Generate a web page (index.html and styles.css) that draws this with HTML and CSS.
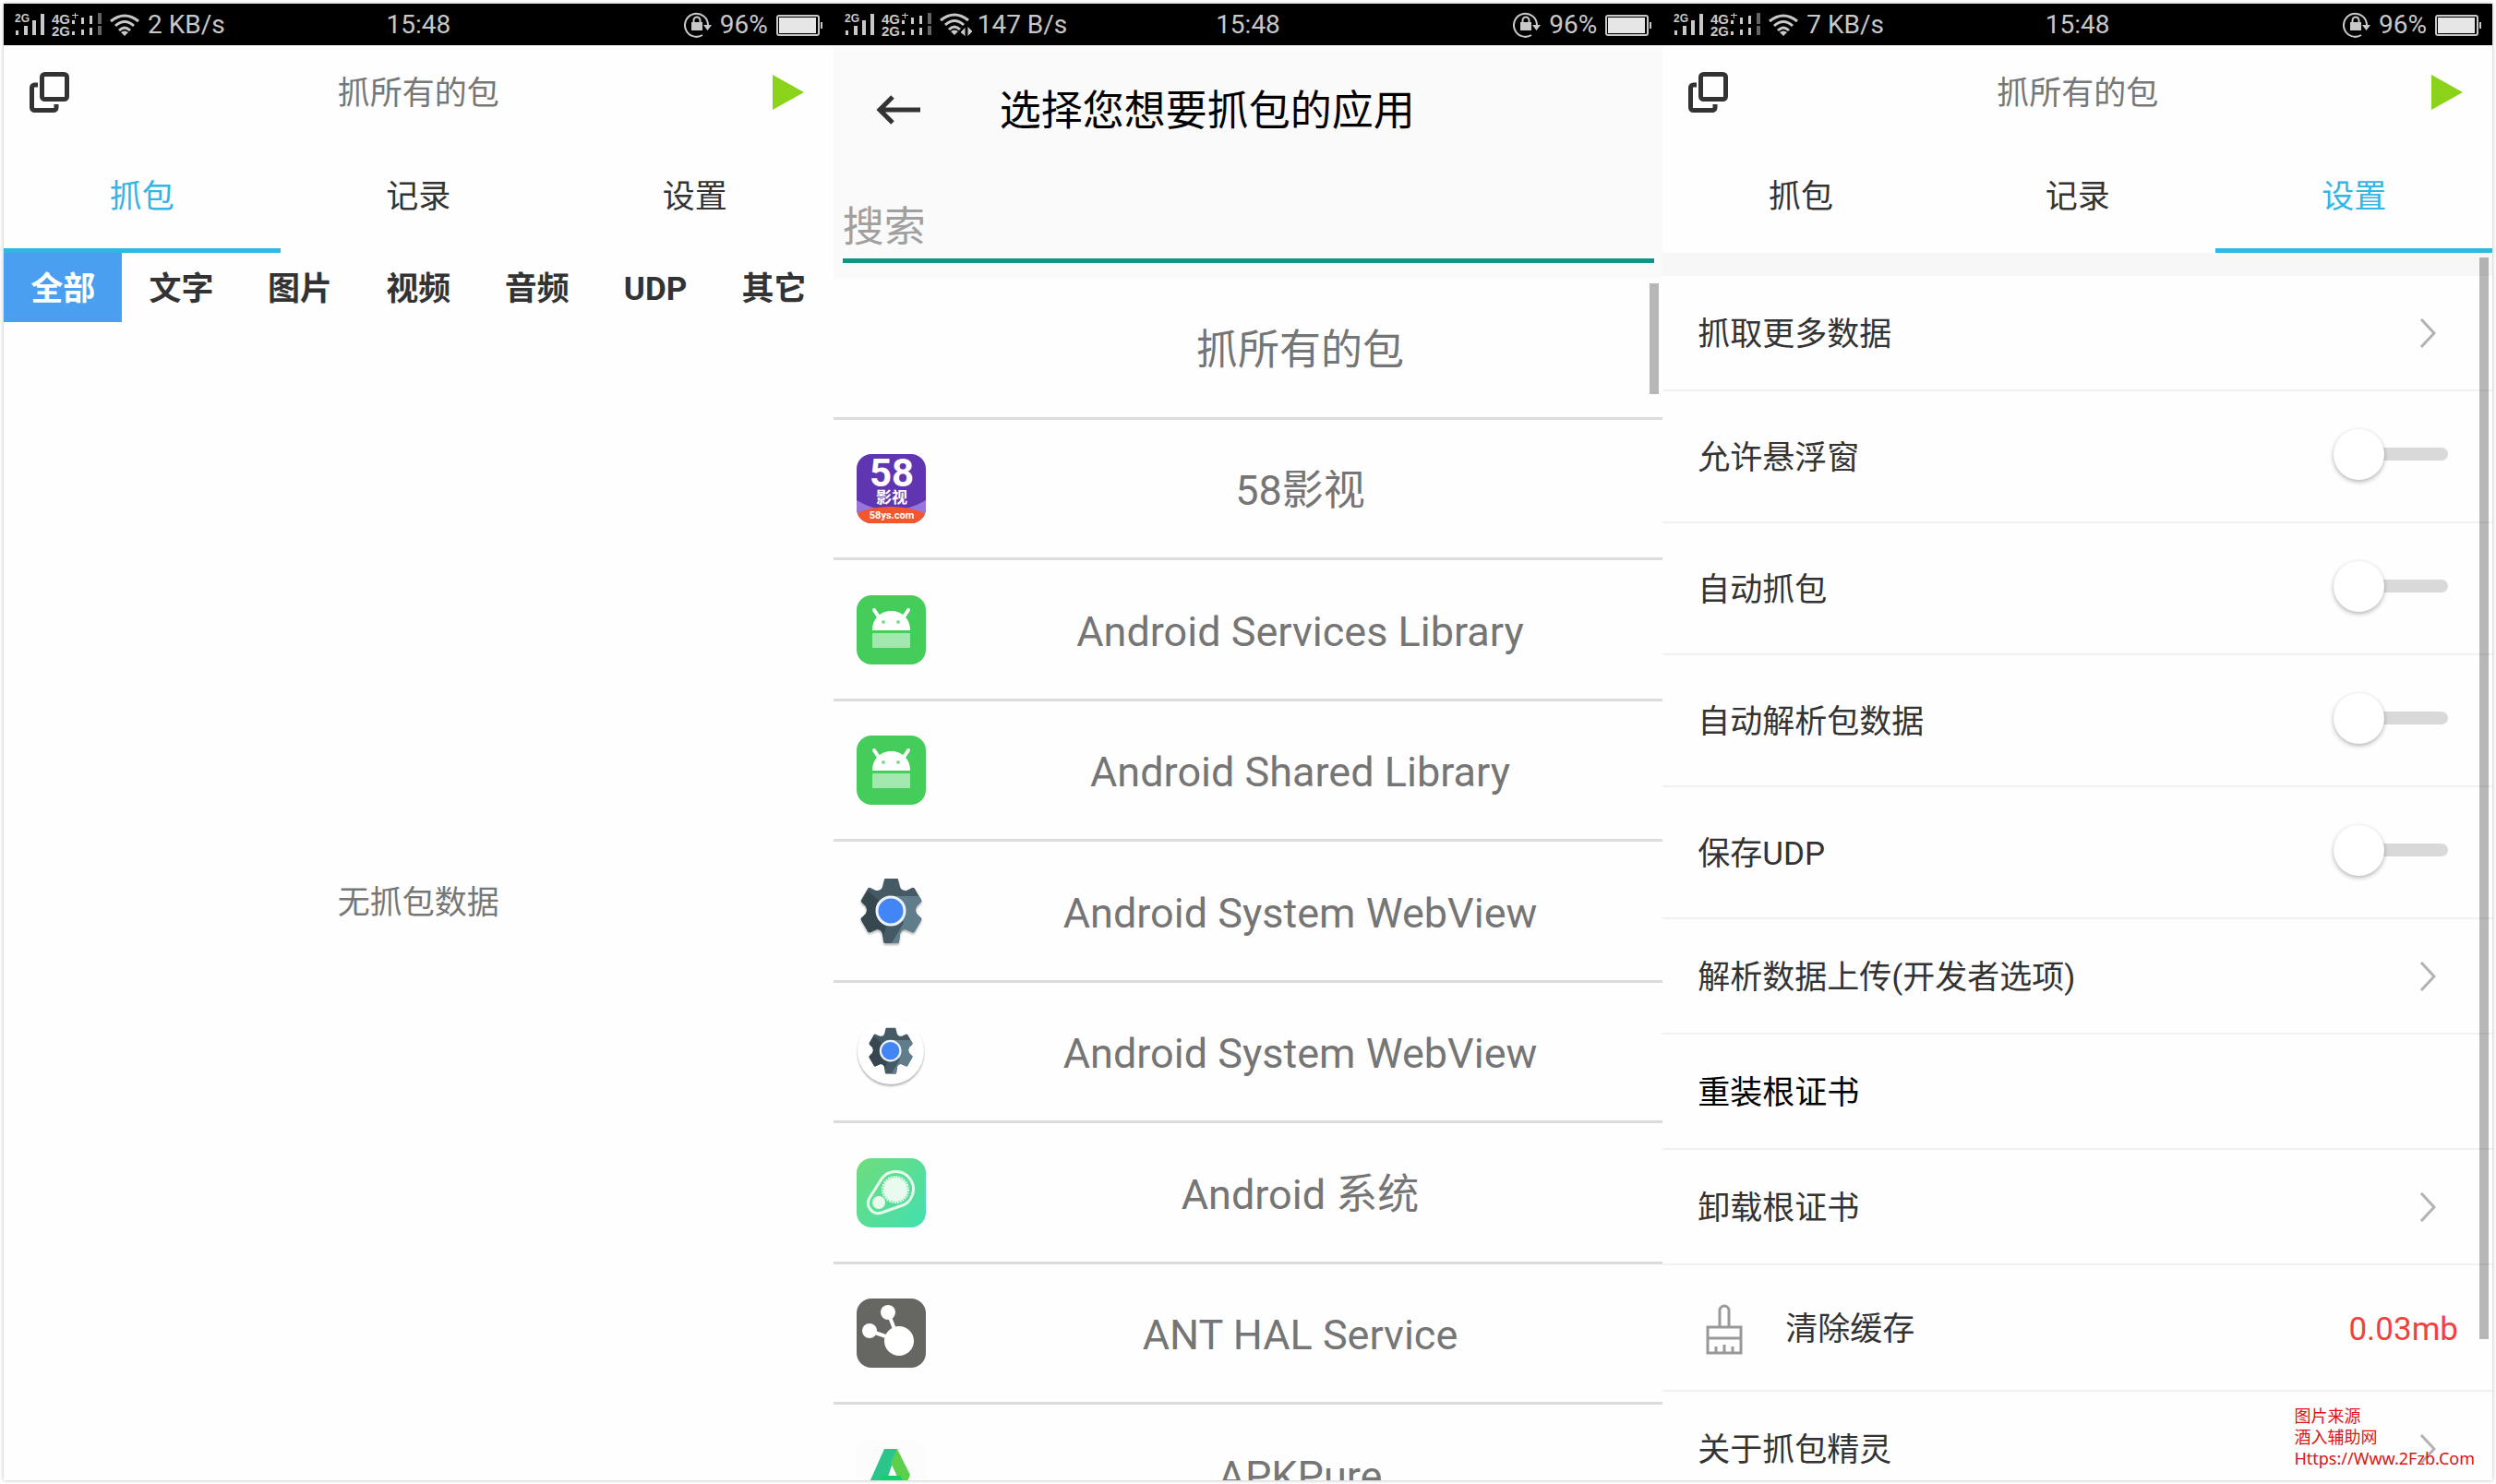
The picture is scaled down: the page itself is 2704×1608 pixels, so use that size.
FILE: index.html
```html
<!DOCTYPE html>
<html lang="zh-CN">
<head>
  <meta charset="UTF-8">
  <meta name="viewport" content="width=device-width, initial-scale=1.0">
  <title>抓包精灵</title>
  <link rel="stylesheet" href="styles.css">
</head>
<body>
  <!-- shared icons -->
  <svg class="defs" width="0" height="0">
    <symbol id="bars" viewBox="0 0 94 26">
      <path d="M1 19h3v5h-3zM10 14h4v10h-4zM19 8h4v16h-4zM28 1h4v23h-4z"/>
      <path d="M62 2h3v-2h1v2h3v1h-3v3h-1v-3h-3zM62 8h3v4h-3zM72 5h3v7h-3zM81 3h3v9h-3zM62 20h3v4h-3zM72 18h3v6h-3zM81 16h3v8h-3z"/>
      <path opacity=".5" d="M90 0h4v12h-4zM90 14h4v10h-4z"/>
    </symbol>
    <symbol id="wifi" viewBox="0 0 32 24">
      <g fill="none" stroke="currentColor" stroke-width="3">
        <path d="M1 8Q16-4 31 8M6 13Q16 4 26 13M10 18Q16 12 22 18"/>
      </g>
      <path d="M12 20Q16 17 20 20L16 24z"/>
    </symbol>
    <symbol id="lock" viewBox="0 0 30 28">
      <path d="M20 25A12.500 12.500 0 1 1 26 14" fill="none" stroke="currentColor" stroke-width="2"/>
      <path d="M21 14h9l-4.500 6zM8 11h12v9h-12z"/>
      <path d="M10.500 12V9a3.500 3.500 0 0 1 7 0v3" fill="none" stroke="currentColor" stroke-width="2"/>
    </symbol>
    <symbol id="battery" viewBox="0 0 50 24">
      <rect x="1" y="2" width="45" height="21" rx="2" fill="none" stroke="currentColor" stroke-width="2"/>
      <path fill="#e6e6e6" d="M3 4h40v17h-40z"/>
      <path d="M48 9h2v7h-2z"/>
    </symbol>
    <symbol id="windows" viewBox="0 0 44 44">
      <g fill="none" stroke="#333" stroke-width="5">
        <rect x="13.500" y="2.500" width="27" height="27" rx="3"/>
        <path d="M9 14H5.500a3 3 0 0 0-3 3V38.500a3 3 0 0 0 3 3H26a3 3 0 0 0 3-3V35"/>
      </g>
    </symbol>
    <symbol id="play" viewBox="0 0 34 38">
      <path fill="#8bd31b" d="M0 0l34 19-34 19z"/>
    </symbol>
    <symbol id="chevron" viewBox="0 0 18 32">
      <path fill="none" stroke="#b2b2b2" stroke-width="3" d="M2 1l14 15-14 15"/>
    </symbol>
    <symbol id="robot" viewBox="0 0 75 75">
      <rect width="75" height="75" rx="16" fill="#45cd5c"/>
      <path d="M19 16l6 9M56 16l-6 9" stroke="#fff" stroke-width="4" stroke-linecap="round"/>
      <path fill="#fff" d="M17 38C17 10 58 10 58 38z"/>
      <rect x="17" y="41" width="41" height="16" rx="1" fill="#a2e8ae"/>
      <circle cx="29" cy="29" r="2" fill="#7fdc90"/>
      <circle cx="45" cy="29" r="2" fill="#7fdc90"/>
    </symbol>
    <symbol id="gear" viewBox="0 0 75 75">
      <clipPath id="gear-shape">
        <path d="M31 2h13q1 0 1 1l2 8q1 4 7 4l6-3q2-1 3 1l7 12q1 2-1 3l-4 4q-2 4 0 8l4 4q2 1 1 3l-7 12q-1 2-3 1l-7-3q-5 0-6 5l-1 8q0 2-2 2h-13q-2 0-2-2l-1-8q-1-5-6-5l-7 3q-2 1-3-1l-7-12q-1-2 1-3l4-4q2-4 0-8l-4-4q-2-1-1-3l7-12q1-2 3-1l6 3q6 0 7-4l2-8q0-1 1-1z"/>
      </clipPath>
      <g clip-path="url(#gear-shape)">
        <path fill="#455a64" d="M0 0h75v75H0z"/>
        <path fill="#37474f" d="M12 15l25 22-12 40H0V37z"/>
        <path fill="#607d8b" d="M37 21h40v56H35l16-27z"/>
      </g>
      <circle cx="37" cy="37" r="15" fill="#4285f4" stroke="#eef2fc" stroke-width="3"/>
    </symbol>
  </svg>

  <main class="screens">
    <section class="phone">
      <div class="status">
        <div class="status-left">
          <svg class="signal" viewBox="0 0 94 26">
            <use href="#bars"/>
            <text x="0" y="10" font-size="12">2G</text>
            <text x="40" y="12">4G</text>
            <text x="40" y="25">2G</text>
          </svg>
          <svg class="wifi"><use href="#wifi"/></svg>
          <span>2 KB/s</span>
        </div>
        <span>15:48</span>
        <div class="status-right">
          <svg class="lock"><use href="#lock"/></svg>
          <span>96%</span>
          <svg class="battery"><use href="#battery"/></svg>
        </div>
      </div>
      <header class="topbar">
        <button class="icon-btn" aria-label="窗口"><svg class="windows"><use href="#windows"/></svg></button>
        <h1>抓所有的包</h1>
        <button class="icon-btn" aria-label="开始"><svg class="play"><use href="#play"/></svg></button>
      </header>
      <nav class="tabs">
        <button class="active">抓包</button>
        <button>记录</button>
        <button>设置</button>
      </nav>
      <div class="filters">
        <button class="active">全部</button>
        <button>文字</button>
        <button>图片</button>
        <button>视频</button>
        <button>音频</button>
        <button>UDP</button>
        <button>其它</button>
      </div>
      <p class="empty">无抓包数据</p>
    </section>

    <section class="phone">
      <div class="status">
        <div class="status-left">
          <svg class="signal" viewBox="0 0 94 26">
            <use href="#bars"/>
            <text x="0" y="10" font-size="12">2G</text>
            <text x="40" y="12">4G</text>
            <text x="40" y="25">2G</text>
          </svg>
          <svg class="wifi wifi-active" viewBox="0 0 36 26">
            <use href="#wifi" width="32" height="24"/>
            <path stroke="#000" stroke-width="1" d="M22 21l6-6v11zM30 14v12l6-6z"/>
          </svg>
          <span>147 B/s</span>
        </div>
        <span>15:48</span>
        <div class="status-right">
          <svg class="lock"><use href="#lock"/></svg>
          <span>96%</span>
          <svg class="battery"><use href="#battery"/></svg>
        </div>
      </div>
      <header class="picker-head">
        <div class="picker-title">
          <button class="icon-btn" aria-label="返回">
            <svg class="back" viewBox="0 0 48 32"><path fill="none" stroke="#333" stroke-width="5" d="M48 16H4M18 2L4 16l14 14"/></svg>
          </button>
          <h2>选择您想要抓包的应用</h2>
        </div>
        <input class="search" type="text" placeholder="搜索" aria-label="搜索">
      </header>
      <div class="scroll-area">
        <ul class="apps">
          <li><span class="app-icon"></span><span>抓所有的包</span></li>
          <li>
            <svg class="app-icon" viewBox="0 0 75 75">
              <clipPath id="round"><rect width="75" height="75" rx="16"/></clipPath>
              <g clip-path="url(#round)">
                <path fill="#5f35b1" d="M0 0h75v75H0z"/>
                <path fill="#9675dc" d="M0 50q37 22 75 0v25H0z"/>
                <ellipse cx="37" cy="77" rx="47" ry="20" fill="#f4572b"/>
              </g>
              <g fill="#fff" text-anchor="middle" font-weight="bold">
                <text x="38" y="35" font-size="42">58</text>
                <text x="38" y="53" font-size="17">影视</text>
                <text x="38" y="70" font-size="11">58ys.com</text>
              </g>
            </svg>
            <span>58影视</span>
          </li>
          <li><svg class="app-icon"><use href="#robot"/></svg><span>Android Services Library</span></li>
          <li><svg class="app-icon"><use href="#robot"/></svg><span>Android Shared Library</span></li>
          <li><svg class="app-icon gear"><use href="#gear"/></svg><span>Android System WebView</span></li>
          <li>
            <svg class="app-icon gear" viewBox="0 0 75 75">
              <circle cx="37" cy="37" r="36" fill="#fff"/>
              <use href="#gear" x="10" y="10" width="54" height="54"/>
            </svg>
            <span>Android System WebView</span>
          </li>
          <li>
            <svg class="app-icon" viewBox="0 0 75 75">
              <linearGradient id="mint" x2="1" y2="1">
                <stop stop-color="#6fdd7c"/>
                <stop offset="1" stop-color="#43dfb0"/>
              </linearGradient>
              <rect width="75" height="75" rx="16" fill="url(#mint)"/>
              <path d="M26 24A19 19 0 1 1 47 52L27 59A11 11 0 0 1 14 43z" fill="none" stroke="#e9fbef" stroke-width="3" stroke-linejoin="round"/>
              <circle cx="42" cy="34" r="13" fill="#e9fbef"/>
              <circle cx="42" cy="34" r="14" fill="none" stroke="#e9fbef" stroke-width="2" stroke-dasharray="2 1"/>
              <circle cx="24" cy="48" r="7" fill="#e9fbef"/>
            </svg>
            <span>Android 系统</span>
          </li>
          <li>
            <svg class="app-icon" viewBox="0 0 75 75">
              <rect width="75" height="75" rx="16" fill="#666663"/>
              <path d="M34 15l12 31L14 35" fill="none" stroke="#fff" stroke-width="4"/>
              <circle cx="34" cy="15" r="8" fill="#fff"/>
              <circle cx="14" cy="35" r="8" fill="#fff"/>
              <circle cx="46" cy="46" r="16" fill="#fff"/>
            </svg>
            <span>ANT HAL Service</span>
          </li>
          <li>
            <svg class="app-icon" viewBox="0 0 75 75">
              <rect width="75" height="75" rx="16" fill="#fcfcfc"/>
              <path fill="#2bc58c" d="M30 10h14L29 55H10z"/>
              <path fill="#5cd04d" d="M44 10l14 28-7 17-14-30z"/>
              <path fill="#12cf6a" d="M28 39h19l10 16H14z"/>
            </svg>
            <span>APKPure</span>
          </li>
        </ul>
        <div class="scrollbar scrollbar-apps"></div>
      </div>
    </section>

    <section class="phone">
      <div class="status">
        <div class="status-left">
          <svg class="signal" viewBox="0 0 94 26">
            <use href="#bars"/>
            <text x="0" y="10" font-size="12">2G</text>
            <text x="40" y="12">4G</text>
            <text x="40" y="25">2G</text>
          </svg>
          <svg class="wifi"><use href="#wifi"/></svg>
          <span>7 KB/s</span>
        </div>
        <span>15:48</span>
        <div class="status-right">
          <svg class="lock"><use href="#lock"/></svg>
          <span>96%</span>
          <svg class="battery"><use href="#battery"/></svg>
        </div>
      </div>
      <header class="topbar">
        <button class="icon-btn" aria-label="窗口"><svg class="windows"><use href="#windows"/></svg></button>
        <h1>抓所有的包</h1>
        <button class="icon-btn" aria-label="开始"><svg class="play"><use href="#play"/></svg></button>
      </header>
      <nav class="tabs">
        <button>抓包</button>
        <button>记录</button>
        <button class="active">设置</button>
      </nav>
      <div class="scroll-area">
        <div class="settings">
          <a class="row" href="#more">抓取更多数据<svg class="chevron"><use href="#chevron"/></svg></a>
          <label class="row row-switch">允许悬浮窗<input type="checkbox" class="switch"></label>
          <label class="row row-switch">自动抓包<input type="checkbox" class="switch"></label>
          <label class="row row-switch">自动解析包数据<input type="checkbox" class="switch"></label>
          <label class="row row-switch">保存UDP<input type="checkbox" class="switch"></label>
          <a class="row" href="#upload">解析数据上传(开发者选项)<svg class="chevron"><use href="#chevron"/></svg></a>
          <a class="row row-dark" href="#reinstall">重装根证书</a>
          <a class="row" href="#uninstall">卸载根证书<svg class="chevron"><use href="#chevron"/></svg></a>
          <a class="row row-cache" href="#cache">
            <svg class="broom" viewBox="0 0 40 54">
              <path fill="none" stroke="#999" stroke-width="3" d="M15 24V6a5 5 0 0 1 10 0v18M2 24h36v28H2zM2 36h36M11 52v-7M20 52v-9M29 52v-7"/>
            </svg>
            清除缓存
            <span class="size">0.03mb</span>
          </a>
          <a class="row" href="#about">关于抓包精灵<svg class="chevron"><use href="#chevron"/></svg></a>
        </div>
        <div class="scrollbar scrollbar-settings"></div>
      </div>
    </section>

    <div class="watermark">图片来源<br>酒入辅助网<br>Https://Www.2Fzb.Com</div>
  </main>
</body>
</html>
```

FILE: styles.css
```css
* {
  box-sizing: border-box;
}

body {
  margin: 0;
  padding: 4px;
  height: 100vh;
  background: #fff;
  color: #333;
  font-family: Roboto, "Noto Sans CJK SC", sans-serif;
  font-size: 35px;
  line-height: 50px;
}

h1, h2, p, ul {
  margin: 0;
  padding: 0;
  font-weight: normal;
}

button {
  padding: 0;
  border: none;
  background: none;
  color: inherit;
  font: inherit;
  cursor: pointer;
}

svg {
  display: block;
  flex: none;
  fill: currentColor;
  overflow: visible;
}

.defs {
  position: absolute;
}

.screens {
  position: relative;
  display: grid;
  grid-template-columns: repeat(3, 1fr);
  height: 100%;
  overflow: hidden;
  background: #fefefe;
  box-shadow: 0 0 4px rgba(0, 0, 0, 0.3);
}

.phone {
  display: flex;
  flex-direction: column;
  min-width: 0;
  min-height: 0;
}

/* status bar */
.status {
  display: grid;
  grid-template-columns: 1fr auto 1fr;
  align-items: center;
  flex: none;
  height: 45px;
  padding: 0 12px;
  background: #000;
  color: #c8c8c8;
  font-size: 28px;
  line-height: 42px;
}

.status-left,
.status-right {
  display: flex;
  align-items: center;
  gap: 9px;
}

.status-right {
  justify-content: flex-end;
}

.signal {
  width: 94px;
  height: 26px;
  font-family: "Liberation Sans", sans-serif;
  font-size: 15px;
  font-weight: bold;
}

.wifi {
  width: 32px;
  height: 24px;
}

.wifi-active {
  width: 36px;
  height: 26px;
  margin-right: -4px;
}

.lock {
  width: 30px;
  height: 28px;
}

.battery {
  width: 50px;
  height: 24px;
}

/* header and tabs */
.topbar {
  display: grid;
  grid-template-columns: 1fr auto 1fr;
  align-items: center;
  flex: none;
  height: 101px;
  padding: 0 32px 0 28px;
}

.topbar h1 {
  padding: 4px 0 0 4px;
  color: #777;
  font-size: 35px;
}

.topbar .icon-btn:last-child {
  justify-self: end;
}

.windows {
  width: 44px;
  height: 44px;
}

.play {
  width: 34px;
  height: 38px;
}

.tabs {
  display: flex;
  flex: none;
  height: 124px;
}

.tabs button {
  flex: 1;
  padding-top: 8px;
  border-bottom: 5px solid transparent;
}

.tabs .active {
  color: #33b5e5;
  border-bottom-color: #33b5e5;
}

.filters {
  display: flex;
  flex: none;
  height: 75px;
}

.filters button {
  flex: 1;
  padding-top: 4px;
  font-weight: bold;
}

.filters .active {
  background: #4a9ff0;
  color: #fff;
}

.empty {
  display: flex;
  flex: 1;
  align-items: center;
  justify-content: center;
  padding-top: 4px;
  color: #777;
}

/* app picker */
.picker-head {
  flex: none;
  height: 253px;
  padding: 37px 9px 0 10px;
  background: #fafafa;
  color: #000;
}

.picker-title {
  display: flex;
  align-items: center;
  gap: 86px;
  height: 66px;
  padding-left: 36px;
}

.picker-title h2 {
  padding-top: 4px;
  font-size: 45px;
}

.back {
  width: 48px;
  height: 32px;
}

.search {
  display: block;
  width: 100%;
  height: 83px;
  margin-top: 50px;
  padding: 10px 0 0;
  border: none;
  border-bottom: 5px solid #0f9485;
  outline: none;
  background: none;
  font: inherit;
  font-size: 45px;
}

.search::placeholder {
  color: #a0a0a0;
}

.scroll-area {
  position: relative;
  flex: 1;
  min-height: 0;
  overflow: hidden;
}

.scrollbar {
  position: absolute;
  width: 10px;
  background: rgba(0, 0, 0, 0.28);
}

.scrollbar-apps {
  top: 5px;
  right: 4px;
  height: 120px;
}

.scrollbar-settings {
  top: 5px;
  right: 4px;
  height: 1172px;
}

.apps {
  list-style: none;
  color: #757575;
  font-size: 45px;
}

.apps li {
  display: flex;
  align-items: center;
  gap: 15px;
  height: 153px;
  padding-left: 25px;
  border-bottom: 3px solid #dcdcdc;
}

.apps li:nth-child(even) {
  height: 152px;
}

.apps li span:last-child {
  flex: 1;
  padding: 5px 2px 0 0;
  text-align: center;
}

.app-icon {
  flex: none;
  width: 75px;
  height: 75px;
}

.gear {
  filter: drop-shadow(0 2px 1px rgba(0, 0, 0, 0.3));
}

/* settings */
.settings {
  border-top: 25px solid #f7f7f7;
}

.row {
  display: flex;
  align-items: center;
  justify-content: space-between;
  height: 125px;
  padding: 5px 61px 0 38px;
  border-bottom: 2px solid #f1f1f1;
  color: #333;
  text-decoration: none;
}

.row-switch {
  height: 143px;
  padding-right: 48px;
}

.row-dark {
  color: #000;
}

.row-cache {
  height: 137px;
  padding: 5px 37px 0 47px;
}

.chevron {
  width: 18px;
  height: 32px;
  margin-bottom: 4px;
}

.switch {
  appearance: none;
  position: relative;
  display: flex;
  align-items: center;
  width: 124px;
  height: 14px;
  margin: 0 0 10px;
  background: #d9d9d9;
  border-radius: 7px;
}

.switch::before {
  content: "";
  width: 55px;
  height: 55px;
  flex: none;
  border-radius: 50%;
  background: #fff;
  box-shadow: 0 2px 5px rgba(0, 0, 0, 0.3);
}

.switch:checked {
  justify-content: flex-end;
}

.broom {
  width: 40px;
  height: 54px;
  margin-right: 46px;
}

.size {
  margin-left: auto;
  color: #f0423f;
}

.watermark {
  position: absolute;
  right: 19px;
  bottom: 12px;
  color: #e01212;
  font-family: "Noto Sans", "Noto Sans CJK SC", sans-serif;
  font-size: 18px;
  line-height: 23px;
}
```
